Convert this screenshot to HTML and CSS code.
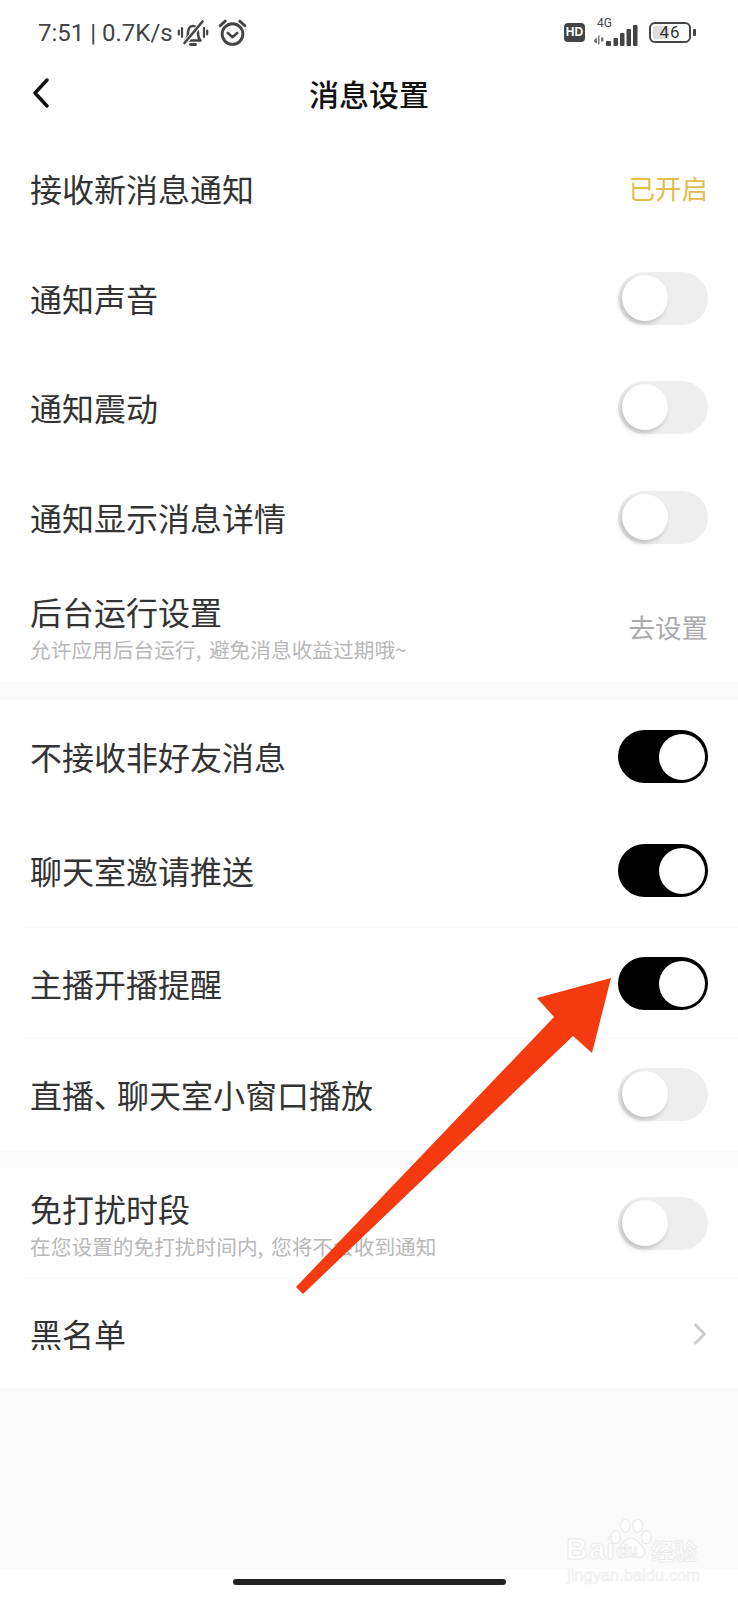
FILE: index.html
```html
<!DOCTYPE html>
<html lang="zh-CN">
<head>
<meta charset="utf-8">
<title>消息设置</title>
<link rel="stylesheet" href="styles.css">
</head>
<body>
<div class="page">
  <header class="status">
    <div class="status-left">
      <span class="status-text">7:51 | 0.7K/s</span>
      <svg class="ico-bell" viewBox="0 0 32 28" fill="none" stroke="#444" stroke-linecap="round" stroke-linejoin="round">
        <path d="M8.500 21.500c2-2 2.500-4 2.500-8 0-4 2.200-6.500 5-6.500s5 2.500 5 6.500c0 4 .5 6 2.500 8z" stroke-width="2.600"/>
        <path d="M13.500 25.500h5" stroke-width="2.800"/>
        <path d="M7 25 26 2" stroke="#fff" stroke-width="4.500"/>
        <path d="M7.500 24 25.500 2.500" stroke-width="2.600"/>
        <path d="M5 9v9M1.800 11.500v4M27 9v9M30.200 11.500v4" stroke-width="2.200"/>
      </svg>
      <svg class="ico-alarm" viewBox="0 0 28 28" fill="none" stroke="#444" stroke-linecap="round" stroke-linejoin="round">
        <circle cx="14" cy="15.500" r="10" stroke-width="2.800"/>
        <path d="M9.500 14.500 14 18.500l4.500-4" stroke-width="2.600"/>
        <path d="M2 7.500 7 3M26 7.500 21 3" stroke-width="2.800"/>
      </svg>
    </div>
    <div class="status-right">
      <span class="hd">HD</span>
      <div class="net">
        <span class="net-label">4G</span>
        <svg class="ico-signal" viewBox="0 0 46 22" fill="#444">
          <path d="M1 15l3-2.500v6l-3-1.500zM5 10.500h1.500v9H5zM8 12.500h2.500v4H8z" fill="#777"/>
          <rect x="13" y="16" width="5" height="5" rx="1"/>
          <rect x="20.500" y="13" width="4.500" height="8" rx="1"/>
          <rect x="27" y="8" width="4.500" height="13" rx="1"/>
          <rect x="33.500" y="4" width="4.500" height="17" rx="1"/>
          <rect x="40" y="0" width="4.500" height="21" rx="1"/>
        </svg>
      </div>
      <div class="battery">
        <div class="battery-body"><span class="battery-level"></span><span class="battery-num">46</span></div>
        <span class="battery-cap"></span>
      </div>
    </div>
  </header>

  <nav class="nav">
    <svg class="ico-back" viewBox="0 0 18 30" fill="none" stroke="#111" stroke-width="3.400" stroke-linecap="round" stroke-linejoin="round"><path d="M15 2 3 15l12 13"/></svg>
    <h1 class="nav-title">消息设置</h1>
  </nav>

  <section class="group">
    <div class="row r110"><span class="label">接收新消息通知</span><span class="value gold">已开启</span></div>
    <div class="row r110"><span class="label">通知声音</span><span class="toggle"></span></div>
    <div class="row r109"><span class="label">通知震动</span><span class="toggle"></span></div>
    <div class="row r110"><span class="label">通知显示消息详情</span><span class="toggle"></span></div>
    <div class="row r110"><div class="stack"><span class="label">后台运行设置</span><span class="sub">允许应用后台运行, 避免消息收益过期哦~</span></div><span class="value grey">去设置</span></div>
  </section>

  <section class="group">
    <div class="row r113"><span class="label">不接收非好友消息</span><span class="toggle on"></span></div>
    <div class="row r115 line"><span class="label">聊天室邀请推送</span><span class="toggle on"></span></div>
    <div class="row r111 line"><span class="label">主播开播提醒</span><span class="toggle on"></span></div>
    <div class="row r111"><span class="label">直播<span class="narrow">、</span>聊天室小窗口播放</span><span class="toggle"></span></div>
  </section>

  <section class="group">
    <div class="row r111 line"><div class="stack"><span class="label">免打扰时段</span><span class="sub">在您设置的免打扰时间内, 您将不会收到通知</span></div><span class="toggle"></span></div>
    <div class="row r109"><span class="label">黑名单</span>
      <svg class="ico-more" viewBox="0 0 14 22" fill="none" stroke="#ccc" stroke-width="3" stroke-linecap="round" stroke-linejoin="round"><path d="M2.500 2 11.500 11l-9 9"/></svg>
    </div>
  </section>

  <div class="filler"></div>
  <footer class="home"><span class="home-bar"></span></footer>

  <svg class="arrow" viewBox="0 0 738 1600"><polygon points="611,978 592,1053 573,1036 303,1294 296,1287 554,1017 537,998" fill="#f63a10"/></svg>

  <div class="mark">
    <span class="mark-bai">Bai</span>
    <svg class="mark-paw" viewBox="0 0 44 48" fill="#fff" stroke="#ebebeb" stroke-width="1.400">
      <ellipse cx="6" cy="20" rx="5" ry="7"/>
      <ellipse cx="16" cy="8" rx="5" ry="7"/>
      <ellipse cx="29" cy="8" rx="5" ry="7"/>
      <ellipse cx="38" cy="20" rx="5" ry="7"/>
      <path d="M22 21c6 0 8 5 12 9 5 5 2 12-5 11-3-.5-5-1-7-1s-4 .5-7 1c-7 1-10-6-5-11 4-4 6-9 12-9z"/>
    </svg>
    <span class="mark-du">du</span>
    <span class="mark-cn">经验</span>
    <span class="mark-url">jingyan.baidu.com</span>
  </div>
</div>
</body>
</html>
```

FILE: styles.css
```css
* { box-sizing: border-box; }
html, body { margin: 0; padding: 0; background: #fff; }
body { font-family: "Noto Sans CJK SC", "Noto Sans", sans-serif; color: #333; }

.page {
  position: relative;
  width: 738px;
  height: 1600px;
  overflow: hidden;
  display: flex;
  flex-direction: column;
  background: #fff;
}

/* status bar */
.status {
  height: 65px;
  flex: none;
  display: flex;
  justify-content: space-between;
  align-items: center;
  padding: 0 42px 0 38px;
}
.status-left { display: flex; align-items: center; }
.status-text { font: 400 24px/32px Roboto, sans-serif; color: #444; }
.ico-bell { width: 32px; height: 28px; margin-left: 4px; }
.ico-alarm { width: 29px; height: 29px; margin-left: 9px; }
.status-right { display: flex; align-items: center; }
.hd {
  width: 21px; height: 19px;
  border-radius: 4px;
  background: #444;
  color: #fff;
  font: 700 12px/19px "Liberation Sans", sans-serif;
  text-align: center;
}
.net { position: relative; width: 46px; height: 28px; margin-left: 8px; }
.net-label { position: absolute; left: 4px; top: -2px; font: 400 12px/12px Roboto, sans-serif; color: #444; }
.ico-signal { position: absolute; left: 0; bottom: 0; width: 46px; height: 22px; }
.battery { display: flex; align-items: center; margin-left: 10px; }
.battery-body {
  position: relative;
  width: 42px; height: 21px;
  border: 2.500px solid #444;
  border-radius: 6px;
  padding: 2px;
}
.battery-level { display: block; width: 16px; height: 100%; background: #ddd; border-radius: 2px; }
.battery-num {
  position: absolute; inset: 0;
  font: 400 17px/16px Roboto, sans-serif;
  letter-spacing: 1px;
  color: #333;
  text-align: center;
}
.battery-cap { width: 3px; height: 7px; margin-left: 2px; background: #444; border-radius: 1px; }

/* nav */
.nav {
  position: relative;
  height: 68px;
  flex: none;
  display: flex;
  align-items: center;
  justify-content: center;
}
.ico-back { position: absolute; left: 32px; top: 13px; width: 18px; height: 30px; }
.nav-title { margin: 0 0 12px; font-size: 30px; line-height: 40px; font-weight: 500; color: #111; }

/* settings groups */
.group { flex: none; background: #fff; }
.group + .group { border-top: 18px solid #fafafa; }
.row {
  display: flex;
  justify-content: space-between;
  align-items: center;
  padding: 0 30px 0 30px;
}
.r109 { height: 109px; }
.r110 { height: 110px; }
.r111 { height: 111px; }
.r113 { height: 113px; }
.r115 { height: 115px; }
.line { background: linear-gradient(#f6f6f6, #f6f6f6) 25px 100% / 100% 1px no-repeat; }

.label { font-size: 32px; line-height: 44px; color: #333; margin-bottom: 1px; }
.narrow { font-feature-settings: "palt"; margin-right: 7px; }
.stack { display: flex; flex-direction: column; }
.stack .label { line-height: 40px; margin-bottom: 0; }
.sub { font-size: 20.700px; line-height: 28px; color: #b8b8b8; margin-top: 4px; word-spacing: 3px; }
.value { font-size: 26.500px; line-height: 36px; }
.gold { color: #e3bd4c; }
.grey { color: #aaa; }

/* toggle */
.toggle {
  position: relative;
  flex: none;
  width: 90px; height: 53px;
  border-radius: 27px;
  background: #eee;
}
.toggle::after {
  content: "";
  position: absolute;
  left: 4px; top: 3px;
  width: 46px; height: 46px;
  border-radius: 50%;
  background: #fff;
  box-shadow: -2px 3px 5px rgba(0, 0, 0, .2);
}
.toggle.on { background: #000; }
.toggle.on::after { left: 41px; top: 4px; box-shadow: none; }
.ico-more { width: 14px; height: 22px; margin-right: 1px; }

/* bottom */
.filler { flex: 1; background: #fafafa; }
.home { height: 31px; flex: none; display: flex; justify-content: center; align-items: center; background: #fff; }
.home-bar { width: 273px; height: 6px; margin-bottom: 5px; border-radius: 3px; background: #222; }

/* overlays */
.arrow { position: absolute; left: 0; top: 0; width: 738px; height: 1600px; pointer-events: none; }
.mark { position: absolute; left: 566px; top: 1518px; width: 135px; height: 66px; }
.mark-bai, .mark-du, .mark-cn, .mark-url { position: absolute; color: #fff; -webkit-text-stroke: 1px #ebebeb; white-space: nowrap; }
.mark-bai { left: 0; top: 14px; font: 700 30px/34px "Liberation Sans", sans-serif; letter-spacing: 1px; }
.mark-paw { position: absolute; left: 44px; top: 0; width: 42px; height: 46px; }
.mark-du { left: 53px; top: 24px; font: 700 15px/16px "Liberation Sans", sans-serif; }
.mark-cn { left: 85px; top: 18px; font: 700 23px/28px "Noto Sans CJK SC", sans-serif; }
.mark-url { left: 1px; top: 48px; font: 400 16.500px/18px "Liberation Sans", sans-serif; -webkit-text-stroke: .6px #ebebeb; }
```
